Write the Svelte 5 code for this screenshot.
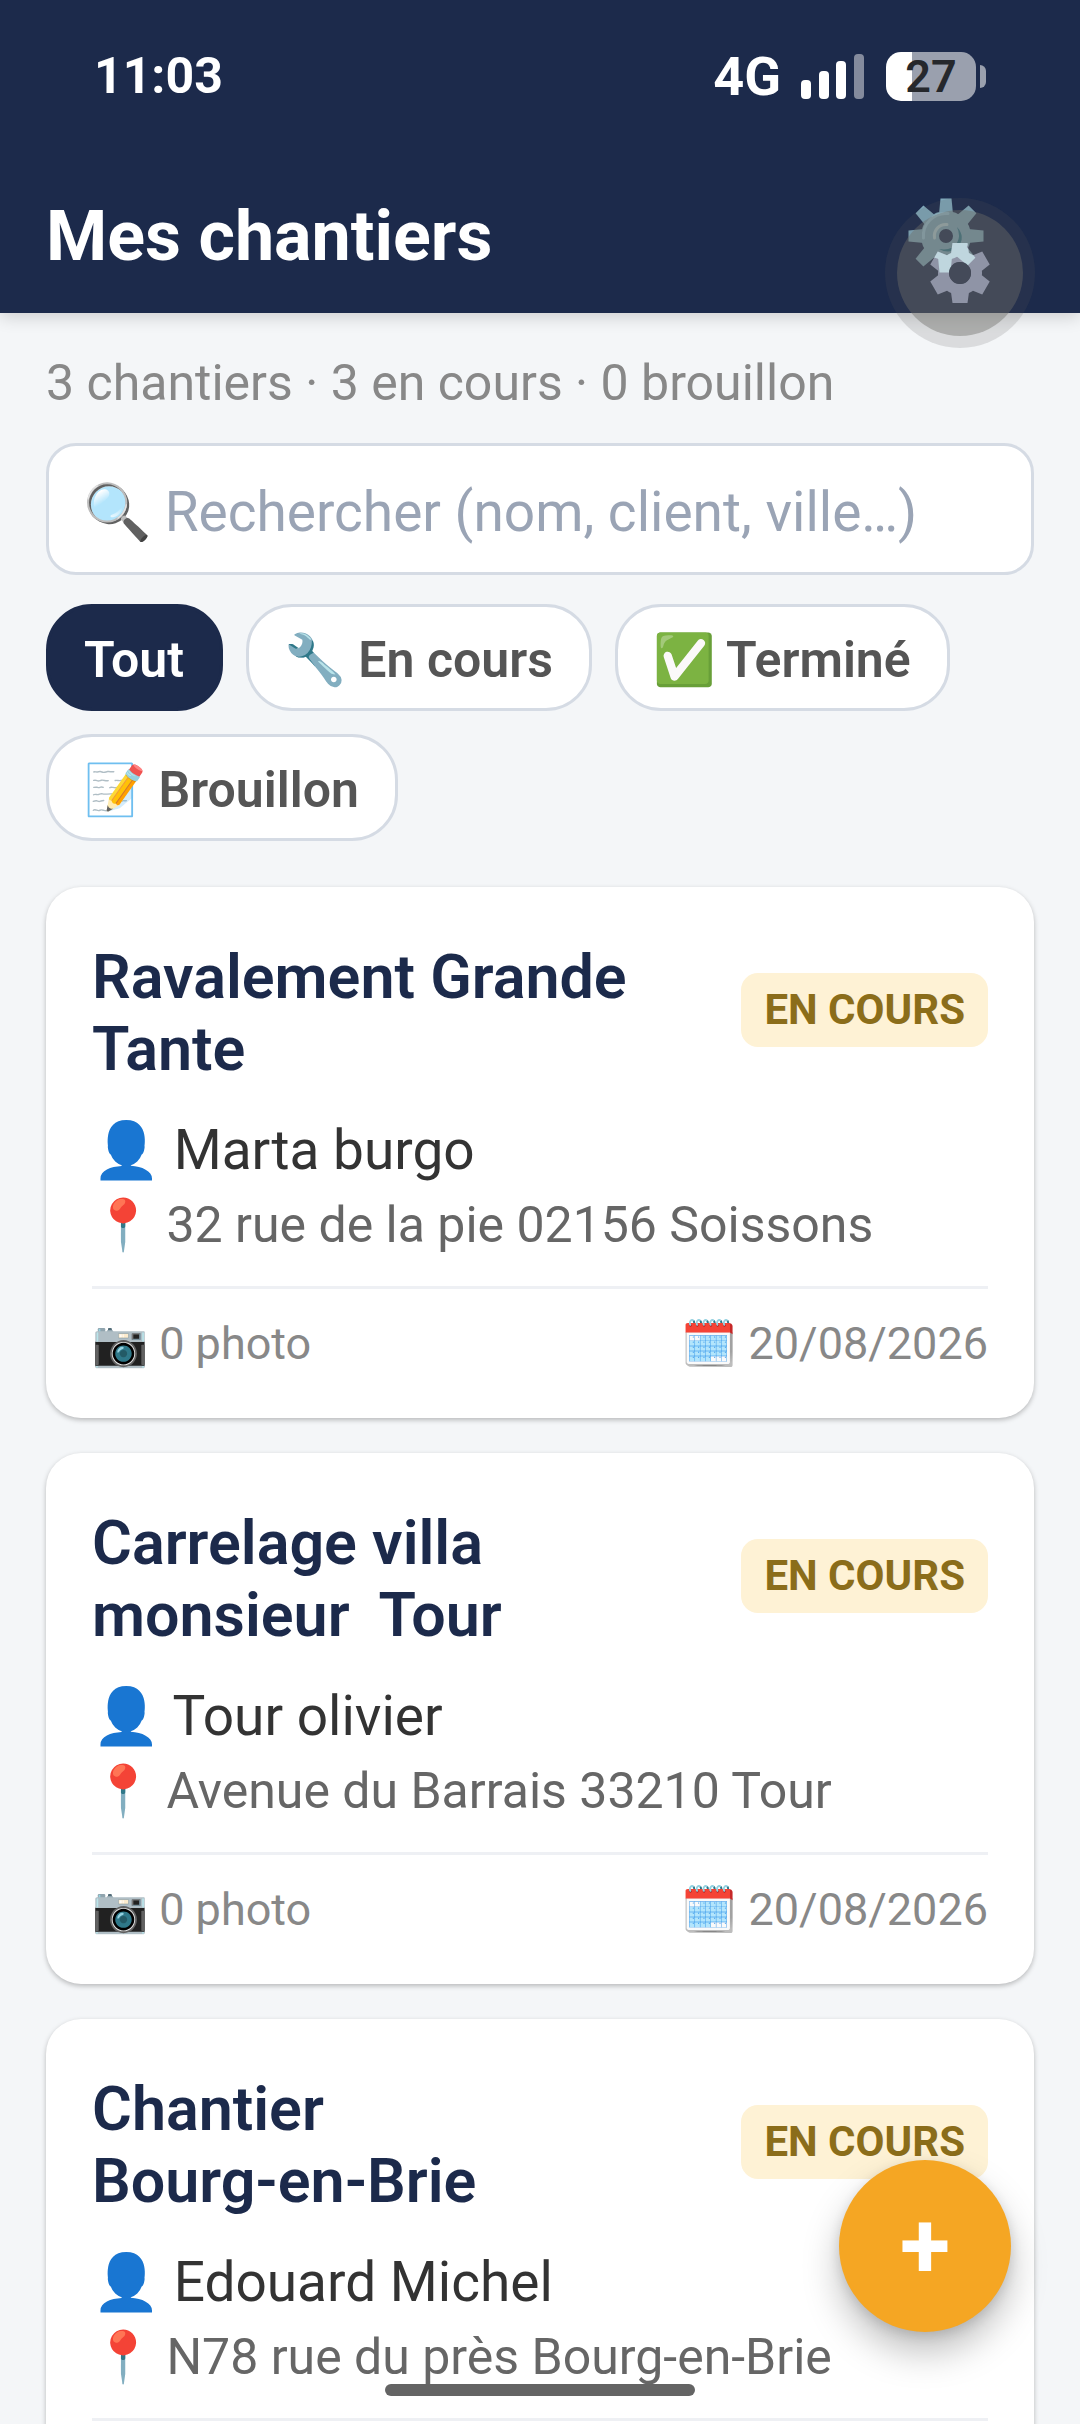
<script lang="ts">
  type Site = { title: string; client: string; address: string; photos: number; date: string };

  const filters = ['Tout', '🔧 En cours', '✅ Terminé', '📝 Brouillon'];
  const sites: Site[] = [
    { title: 'Ravalement Grande Tante', client: 'Marta burgo', address: '32 rue de la pie 02156 Soissons', photos: 0, date: '20/08/2026' },
    { title: 'Carrelage villa monsieur  Tour', client: 'Tour olivier', address: 'Avenue du Barrais 33210 Tour', photos: 0, date: '20/08/2026' },
    { title: 'Chantier\nBourg-en-Brie', client: 'Edouard Michel', address: 'N78 rue du près Bourg-en-Brie', photos: 0, date: '20/08/2026' }
  ];
  const eight = [0, 45, 90, 135, 180, 225, 270, 315];
  const six = [0, 60, 120, 180, 240, 300];

  let active = $state('Tout');
  let query = $state('');
</script>

<div class="app">
  <div class="status">
    <span class="time">11:03</span>
    <div class="indicators">
      <span class="network">4G</span>
      <svg class="signal" viewBox="0 0 63 45" aria-hidden="true">
        <rect x="0" y="26" width="10" height="19" rx="4" />
        <rect x="18" y="17" width="10" height="28" rx="4" />
        <rect x="35" y="7" width="10" height="38" rx="4" />
        <rect x="53" y="0" width="10" height="45" rx="4" opacity=".46" />
      </svg>
      <div class="battery"><span class="level">27</span></div>
    </div>
  </div>

  <header>
    <h1>Mes chantiers</h1>
    <button class="settings" aria-label="Réglages">
      <svg viewBox="-38 -38 76 76" aria-hidden="true">
        <g fill="#80a9bb">
          {#each eight as a}
            <path d="M-5.5 -37.5H5.5L7 -22H-7Z" transform="rotate({a})" />
          {/each}
          <circle r="16" fill="none" stroke="#80a9bb" stroke-width="18" />
        </g>
        <path d="M-22.500 2A22.500 22.500 0 0 1 2 -22.500" fill="none" stroke="#9cc6d6" stroke-width="3" stroke-linecap="round" />
        <path d="M-11.500 2A11.500 11.500 0 0 1 1 -11.500" fill="none" stroke="#b4cfd2" stroke-width="3" stroke-linecap="round" />
        <path d="M11 -9Q20 1 12 11Q4 19 -7 13Q6 15 11 7Q15 0 11 -9Z" fill="#2f7889" />
      </svg>
    </button>
  </header>

  <main>
    <p class="stats">3 chantiers · 3 en cours · 0 brouillon</p>
    <input class="search" type="search" aria-label="Rechercher" placeholder="🔍 Rechercher (nom, client, ville…)" bind:value={query} />

    <div class="filters">
      {#each filters as f}
        <button class="chip" class:active={active === f} onclick={() => (active = f)}>{f}</button>
      {/each}
    </div>

    <div class="list">
      {#each sites as s}
        <article class="card">
          <div class="head">
            <h2>{s.title}</h2>
            <span class="badge">EN COURS</span>
          </div>
          <p class="client">👤 {s.client}</p>
          <p class="address">📍 {s.address}</p>
          <footer>
            <span>📷 {s.photos} photo</span>
            <span>🗓️ {s.date}</span>
          </footer>
        </article>
      {/each}
    </div>
  </main>

  <button class="floating" aria-label="Outils">
    <svg viewBox="-75 -75 150 150" aria-hidden="true">
      <defs>
        <clipPath id="cog">
          {#each six as a}
            <path d="M-7.500 -30H7.500L9.500 -16H-9.500Z" transform="rotate({a})" />
          {/each}
          <circle r="22" />
        </clipPath>
        <mask id="hole">
          <rect x="-40" y="-40" width="80" height="80" fill="#fff" />
          <circle r="11" fill="#000" />
        </mask>
      </defs>
      <circle r="75" fill="rgba(91,91,91,.17)" />
      <circle r="63" fill="rgba(109,109,104,.42)" />
      <g mask="url(#hole)">
        <g clip-path="url(#cog)">
          <rect x="-40" y="-40" width="80" height="80" fill="#8f94a6" />
          <g transform="translate(-15 -38)" fill="#bfd6de">
            {#each eight as a}
              <path d="M-5.500 -37.500H5.500L7 -22H-7Z" transform="rotate({a})" />
            {/each}
            <circle r="25" />
          </g>
        </g>
      </g>
      <circle r="11" fill="#444a59" />
    </svg>
  </button>

  <button class="add" aria-label="Ajouter un chantier">+</button>
  <div class="home"></div>
</div>

<style>
  :global(body) { background: #f4f6f8; }
  * { box-sizing: border-box; }
  h1, h2, p { margin: 0; }
  button, input { font-family: inherit; }
  button { cursor: pointer; }
  .app {
    position: relative;
    display: flex;
    flex-direction: column;
    height: 100vh;
    overflow: hidden;
    background: #f4f6f8;
    font-family: Roboto, sans-serif;
  }
  .status {
    position: relative;
    z-index: 1;
    flex: none;
    display: flex;
    justify-content: space-between;
    align-items: flex-start;
    height: 157px;
    padding: 52px 94px 0;
    background: #1c2a4b;
    color: #fff;
  }
  .time { font-size: 50px; font-weight: 700; line-height: 49px; }
  .indicators { display: flex; align-items: center; height: 49px; }
  .network { margin-right: 20px; font-size: 54px; font-weight: 700; line-height: 49px; }
  .signal { width: 63px; height: 45px; margin-right: 22px; fill: #fff; }
  .battery {
    position: relative;
    width: 90px;
    height: 49px;
    margin-right: 10px;
    border-radius: 15px;
    background: linear-gradient(90deg, #fff 26px, #9aa0ae 26px);
  }
  .battery::after {
    content: '';
    position: absolute;
    top: 13px;
    right: -10px;
    width: 6px;
    height: 23px;
    border-radius: 0 6px 6px 0;
    background: #9aa0ae;
  }
  .level {
    display: block;
    text-align: center;
    color: #26282c;
    font-size: 45px;
    font-weight: 600;
    line-height: 49px;
  }
  header {
    flex: none;
    display: flex;
    justify-content: space-between;
    align-items: center;
    height: 156px;
    padding: 2px 96px 0 46px;
    background: #1c2a4b;
    color: #fff;
    box-shadow: 0 4px 16px rgba(0, 0, 0, .16);
  }
  h1 { font-size: 70px; font-weight: 700; line-height: 80px; }
  .settings { width: 76px; height: 76px; padding: 0; border: 0; background: none; }
  .settings svg { display: block; width: 76px; height: 76px; }
  main { flex: 1; min-height: 0; padding: 41px 46px 0; }
  .stats { color: #888; font-size: 50px; line-height: 58px; }
  .search {
    display: block;
    width: 100%;
    height: 132px;
    margin-top: 31px;
    padding: 6px 34px 0;
    border: 3px solid #d5dbe4;
    border-radius: 30px;
    background: #fff;
    color: #333;
    font-size: 55px;
    outline: none;
    appearance: none;
  }
  .search::placeholder { color: #9aa4b5; opacity: 1; }
  .filters { display: flex; flex-wrap: wrap; gap: 23px; margin-top: 29px; }
  .chip {
    height: 107px;
    padding: 5px 36px 0 35px;
    border: 3px solid #d5dbe4;
    border-radius: 46px;
    background: #fff;
    color: #555;
    font-size: 50px;
    font-weight: 600;
    line-height: 96px;
    white-space: nowrap;
  }
  .chip.active { border-color: #1c2a4b; background: #1c2a4b; color: #fff; }
  .list { display: flex; flex-direction: column; gap: 35px; margin-top: 46px; }
  .card {
    padding: 46px;
    border-radius: 35px;
    background: #fff;
    box-shadow: 0 2px 5px rgba(0, 0, 0, .25);
  }
  .head { display: flex; justify-content: space-between; align-items: center; gap: 23px; }
  h2 {
    flex: 1;
    padding: 8px 0 2px;
    color: #1c2a4b;
    font-size: 61px;
    font-weight: 600;
    line-height: 72px;
    white-space: pre-wrap;
  }
  .badge {
    padding: 0 23px;
    border-radius: 17px;
    background: #fef2d5;
    color: #8b6d1a;
    font-size: 42px;
    font-weight: 700;
    line-height: 74px;
    white-space: nowrap;
  }
  .client { margin-top: 26px; color: #333; font-size: 55px; line-height: 75px; }
  .address { color: #666; font-size: 50px; line-height: 74px; }
  footer {
    display: flex;
    justify-content: space-between;
    margin-top: 24px;
    padding-top: 26px;
    border-top: 3px solid #eef0f4;
    color: #888;
    font-size: 45px;
    line-height: 57px;
  }
  .floating {
    position: absolute;
    top: 198px;
    right: 45px;
    width: 150px;
    height: 150px;
    padding: 0;
    border: 0;
    background: none;
  }
  .floating svg { display: block; width: 150px; height: 150px; }
  .add {
    position: absolute;
    right: 69px;
    bottom: 92px;
    width: 172px;
    height: 172px;
    padding: 0;
    border: 0;
    border-radius: 50%;
    background: #f5a623;
    color: #fff;
    font-size: 92px;
    font-weight: 700;
    line-height: 172px;
    box-shadow: 0 20px 36px rgba(0, 0, 0, .25), 0 4px 12px rgba(0, 0, 0, .12);
  }
  .home {
    position: absolute;
    left: 50%;
    bottom: 28px;
    width: 310px;
    height: 12px;
    margin-left: -155px;
    border-radius: 6px;
    background: #646464;
  }
</style>
